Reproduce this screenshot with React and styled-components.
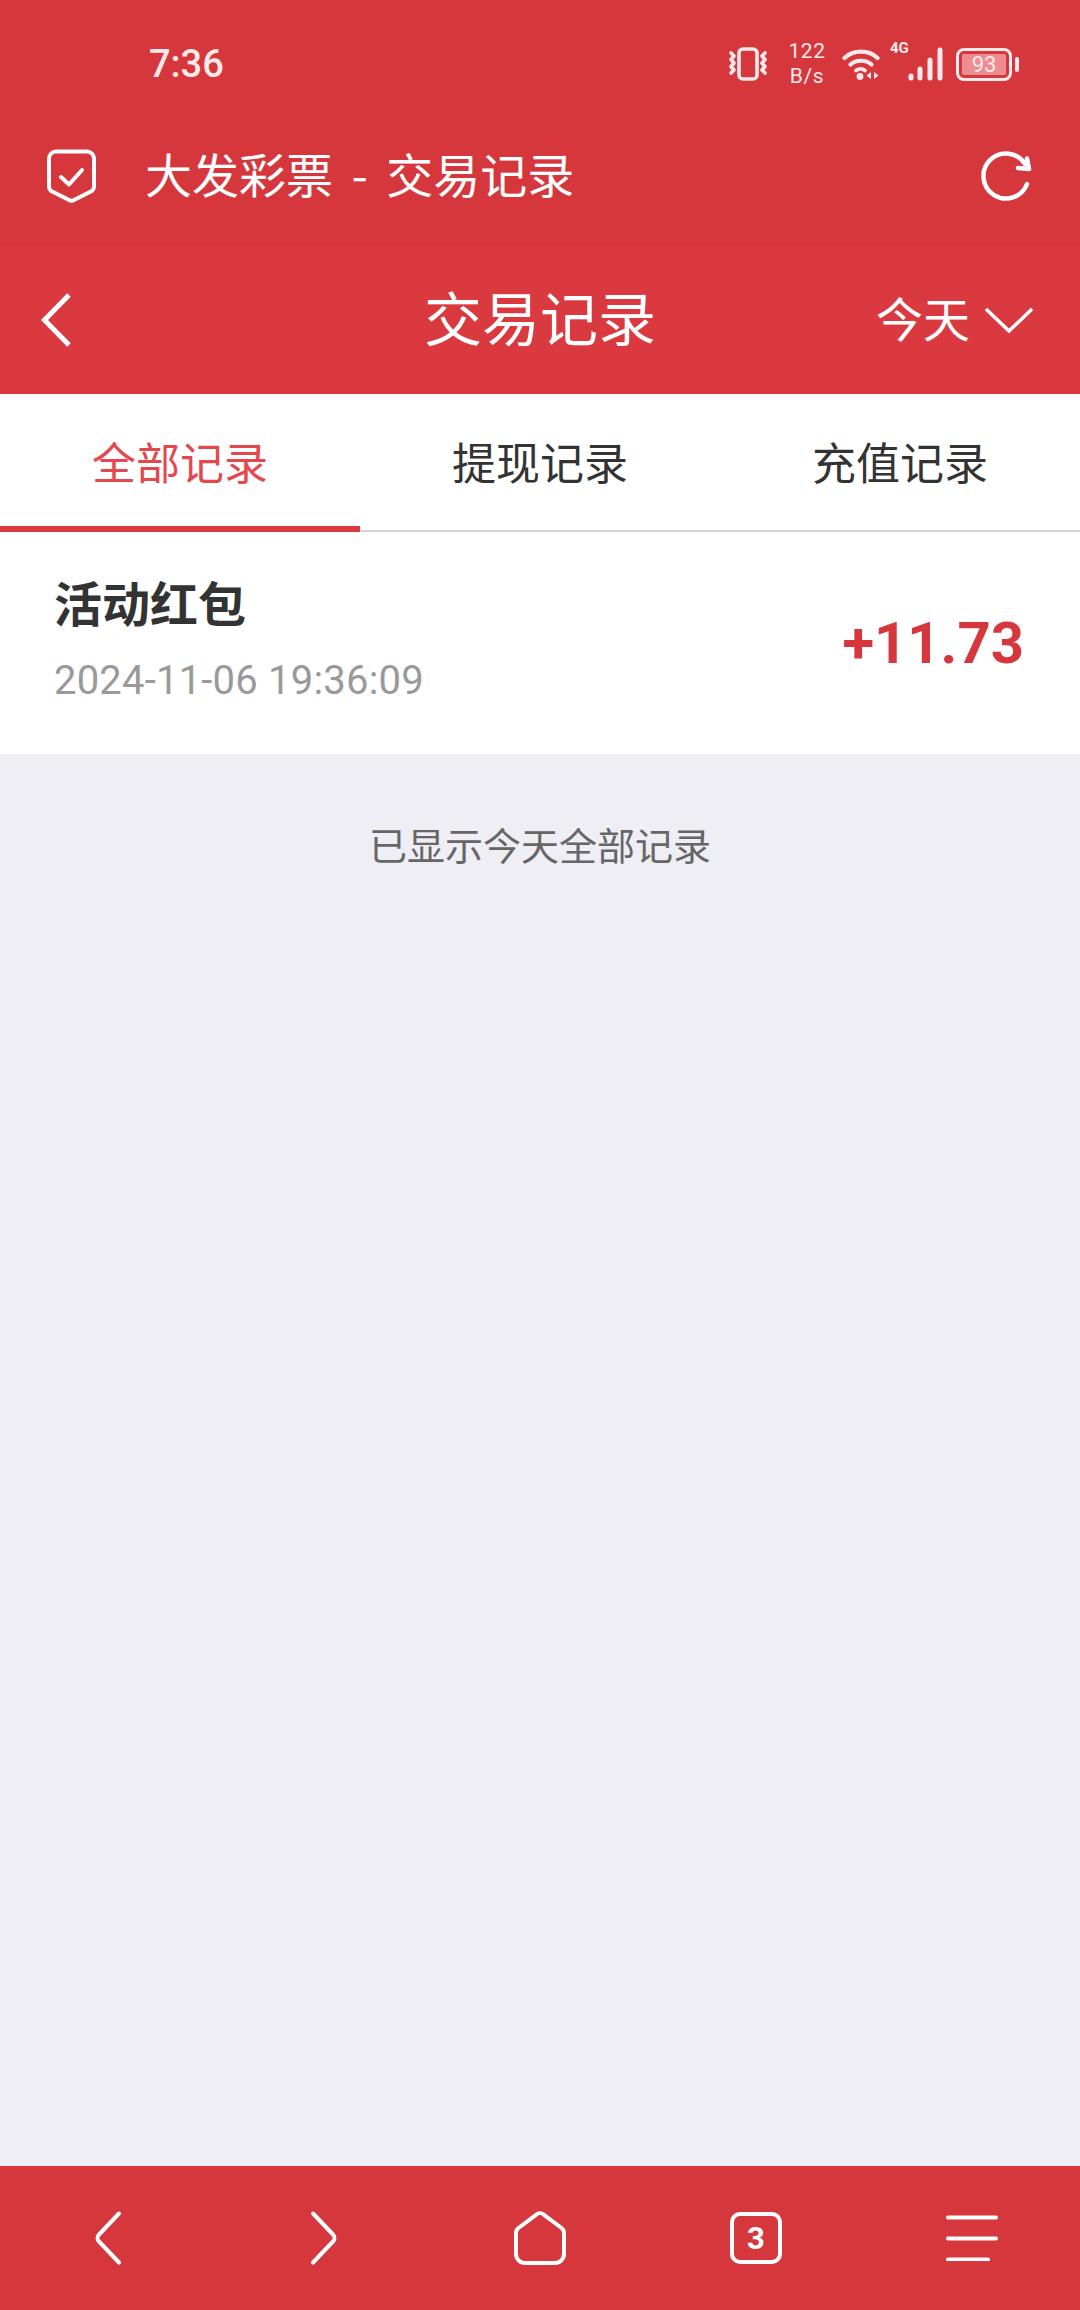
import React from "react";
import styled, { createGlobalStyle } from "styled-components";

const GlobalStyle = createGlobalStyle`
  html, body {
    margin: 0;
    padding: 0;
    background: #eeeef4;
    font-family: Roboto, "Noto Sans CJK SC", sans-serif;
  }
  * { box-sizing: border-box; }
`;

const tabs = ["全部记录", "提现记录", "充值记录"];

const Shield = () => (
  <svg width="49" height="54" viewBox="0 0 49 54" fill="none" stroke="#fff" strokeWidth="4" strokeLinejoin="round" strokeLinecap="round">
    <path d="M9 2.500h31a7 7 0 0 1 7 7v28.500a5 5 0 0 1-2.200 4L27 51a5 5 0 0 1-5 0L4.200 42a5 5 0 0 1-2.200-4V9.500a7 7 0 0 1 7-7z" />
    <path d="M14 28l8 7.500 13-14.500" />
  </svg>
);

const Refresh = () => (
  <svg width="51" height="50" viewBox="0 0 51 50" fill="none" stroke="#fff" strokeWidth="4.500" strokeLinecap="round" strokeLinejoin="round">
    <path d="M46 33a22.500 22.500 0 1 1-2-20" />
    <path d="M46 7.500l2 10.500-11-1" />
  </svg>
);

const Vibrate = () => (
  <svg width="40" height="34" viewBox="0 0 40 34" fill="none" stroke="#ffe9ea" strokeWidth="3.600" strokeLinecap="round" strokeLinejoin="round">
    <rect x="11" y="2" width="18" height="30" rx="4" />
    <path d="M3 6l3 3-3 3.500 3 3.500-3 3.500 3 3.500-3 3" />
    <path d="M37 6l-3 3 3 3.500-3 3.500 3 3.500-3 3.500 3 3" />
  </svg>
);

const Wifi = () => (
  <svg width="38" height="32" viewBox="0 0 38 32" fill="none" stroke="#ffe9ea" strokeLinecap="round">
    <path d="M2.500 10C11 1.500 27 1.500 35.500 10" strokeWidth="4.200" />
    <path d="M8.500 16.500C14 11.500 24 11.500 29.500 16.500" strokeWidth="4.200" />
    <path d="M14 22.500c3-2.200 6-2.200 9 0" strokeWidth="3.800" />
    <circle cx="18" cy="28.500" r="3.400" fill="#ffe9ea" stroke="none" />
    <path d="M29 24v7l-4.500-3.500z" fill="#ffe9ea" stroke="none" />
    <path d="M32 24v7l4.500-3.500z" fill="#ffe9ea" stroke="none" />
  </svg>
);

const Signal = () => (
  <svg width="35" height="34" viewBox="0 0 35 34" fill="none" stroke="#ffe9ea" strokeWidth="5" strokeLinecap="round">
    <path d="M3 29v2M12 22v9M22 13v18M32 3v28" />
  </svg>
);

const ChevronBack = () => (
  <svg width="30" height="54" viewBox="0 0 30 54" fill="none" stroke="#fff" strokeWidth="5">
    <path d="M28 2L3.500 27 28 52" />
  </svg>
);

const ChevronDown = () => (
  <svg width="48" height="26" viewBox="0 0 48 26" fill="none" stroke="#fff" strokeWidth="3.500">
    <path d="M1 2l23 22L47 2" />
  </svg>
);

const NavBack = () => (
  <svg width="26" height="54" viewBox="0 0 26 54" fill="none" stroke="#fff" strokeWidth="4" strokeLinecap="round" strokeLinejoin="round">
    <path d="M24 2.500L4 23.500a5 5 0 0 0 0 7L24 51.500" />
  </svg>
);

const NavForward = () => (
  <svg width="26" height="54" viewBox="0 0 26 54" fill="none" stroke="#fff" strokeWidth="4" strokeLinecap="round" strokeLinejoin="round">
    <path d="M2 2.500L22 23.500a5 5 0 0 1 0 7L2 51.500" />
  </svg>
);

const NavHome = () => (
  <svg width="52" height="54" viewBox="0 0 52 54" fill="none" stroke="#fff" strokeWidth="4" strokeLinejoin="round">
    <path d="M22 3.800a6 6 0 0 1 8 0L47.500 17a6 6 0 0 1 2.500 5v21a9 9 0 0 1-9 9H11a9 9 0 0 1-9-9V22a6 6 0 0 1 2.500-5z" />
  </svg>
);

const NavMenu = () => (
  <svg width="52" height="46" viewBox="0 0 52 46" fill="none" stroke="#fff" strokeWidth="4" strokeLinecap="round">
    <path d="M2 2.500h48M2 23.500h48M2 44.500h40" />
  </svg>
);

const Page = styled.div`
  width: 1080px;
  height: 2310px;
  display: flex;
  flex-direction: column;
  overflow: hidden;
  background: #eeeef4;
`;

const StatusBar = styled.div`
  height: 128px;
  background: #d6373d;
  display: flex;
  align-items: center;
  justify-content: space-between;
  padding: 0 68px 0 149px;
  color: #ffe9ea;
`;

const Clock = styled.span`
  font-size: 38px;
  font-weight: 500;
`;

const StatusIcons = styled.div`
  display: flex;
  align-items: center;
`;

const Speed = styled.div`
  width: 38px;
  margin: 0 16px 0 20px;
  font-size: 21px;
  line-height: 25px;
  letter-spacing: 0.6px;
  text-align: center;
  white-space: nowrap;
`;

const NetType = styled.span`
  align-self: flex-start;
  width: 18px;
  margin: 0 0 0 10px;
  font-size: 15px;
  line-height: 18px;
  font-weight: 700;
`;

const SignalWrap = styled.div`
  display: flex;
  margin: 0 13px 0 0;
`;

const Battery = styled.div`
  width: 56px;
  height: 33px;
  border: 3px solid #ffe9ea;
  border-radius: 8px;
  padding: 3px;
  position: relative;
  display: flex;
  &::after {
    content: "";
    position: absolute;
    right: -10px;
    top: 6px;
    width: 4px;
    height: 15px;
    border-radius: 2px;
    background: #ffe9ea;
  }
`;

const BatteryLevel = styled.div`
  flex: 1;
  background: #eb8d91;
  border-radius: 2px;
  color: #ffe9ea;
  font-size: 22px;
  line-height: 21px;
  text-align: center;
`;

const BrowserBar = styled.div`
  height: 118px;
  background: #d6373d;
  display: flex;
  align-items: center;
  padding: 0 48px 22px 47px;
  color: #fff;
`;

const BrowserTitle = styled.div`
  flex: 1;
  margin-left: 49px;
  padding-bottom: 8px;
  font-size: 47px;
  font-family: "Noto Sans CJK SC", sans-serif;
  word-spacing: 8px;
`;

const Header = styled.div`
  height: 148px;
  background: #da3940;
  display: grid;
  grid-template-columns: 1fr auto 1fr;
  align-items: center;
  padding: 0 47px;
  color: #fff;
  font-family: "Noto Sans CJK SC", sans-serif;
`;

const BackButton = styled.div`
  display: flex;
  margin-left: -6px;
`;

const HeaderTitle = styled.div`
  padding-bottom: 8px;
  font-size: 58px;
`;

const DateFilter = styled.div`
  justify-self: end;
  display: flex;
  align-items: center;
  gap: 15px;
  font-size: 47px;
`;

const DateLabel = styled.span`
  padding-bottom: 8px;
`;

const TabBar = styled.div`
  height: 138px;
  display: grid;
  grid-template-columns: repeat(3, 360px);
  background: #fff;
  border-bottom: 2px solid #d4d4d4;
`;

const Tab = styled.div`
  height: 138px;
  display: flex;
  align-items: center;
  justify-content: center;
  padding-top: 2px;
  font-family: "Noto Sans CJK SC", sans-serif;
  font-size: 44px;
  color: ${(props) => (props.active ? "#e4474d" : "#333")};
  border-bottom: 6px solid ${(props) => (props.active ? "#da3940" : "transparent")};
`;

const RecordRow = styled.div`
  height: 222px;
  background: #fff;
  display: flex;
  align-items: center;
  justify-content: space-between;
  padding: 0 56px 0 54px;
`;

const RecordInfo = styled.div`
  padding-bottom: 17px;
`;

const RecordName = styled.div`
  font-family: "Noto Sans CJK SC", sans-serif;
  font-size: 48px;
  font-weight: 700;
  line-height: 70px;
  color: #333;
`;

const RecordTime = styled.div`
  margin-top: 22px;
  font-size: 40px;
  line-height: 46px;
  letter-spacing: 0.2px;
  color: #999;
`;

const Amount = styled.div`
  font-size: 58px;
  font-weight: 700;
  color: #d6373d;
`;

const Content = styled.div`
  flex: 1;
`;

const EndNote = styled.div`
  padding-top: 62px;
  text-align: center;
  font-family: "Noto Sans CJK SC", sans-serif;
  font-size: 38px;
  line-height: 56px;
  color: #666;
`;

const BottomNav = styled.div`
  height: 144px;
  background: #d6373d;
  display: grid;
  grid-template-columns: repeat(5, 216px);
`;

const NavItem = styled.div`
  display: flex;
  align-items: center;
  justify-content: center;
`;

const TabCount = styled.div`
  width: 52px;
  height: 52px;
  border: 4px solid #fff;
  border-radius: 10px;
  display: flex;
  align-items: center;
  justify-content: center;
  color: #fff;
  font-size: 31px;
  font-weight: 700;
`;

export default function App() {
  return (
    <Page>
      <GlobalStyle />
      <StatusBar>
        <Clock>7:36</Clock>
        <StatusIcons>
          <Vibrate />
          <Speed>122<br />B/s</Speed>
          <Wifi />
          <NetType>4G</NetType>
          <SignalWrap><Signal /></SignalWrap>
          <Battery><BatteryLevel>93</BatteryLevel></Battery>
        </StatusIcons>
      </StatusBar>
      <BrowserBar>
        <Shield />
        <BrowserTitle>大发彩票 - 交易记录</BrowserTitle>
        <Refresh />
      </BrowserBar>
      <Header>
        <BackButton><ChevronBack /></BackButton>
        <HeaderTitle>交易记录</HeaderTitle>
        <DateFilter><DateLabel>今天</DateLabel><ChevronDown /></DateFilter>
      </Header>
      <TabBar>
        {tabs.map((t, i) => (
          <Tab key={t} active={i === 0}>{t}</Tab>
        ))}
      </TabBar>
      <Content>
        <RecordRow>
          <RecordInfo>
            <RecordName>活动红包</RecordName>
            <RecordTime>2024-11-06 19:36:09</RecordTime>
          </RecordInfo>
          <Amount>+11.73</Amount>
        </RecordRow>
        <EndNote>已显示今天全部记录</EndNote>
      </Content>
      <BottomNav>
        <NavItem><NavBack /></NavItem>
        <NavItem><NavForward /></NavItem>
        <NavItem><NavHome /></NavItem>
        <NavItem><TabCount>3</TabCount></NavItem>
        <NavItem><NavMenu /></NavItem>
      </BottomNav>
    </Page>
  );
}
